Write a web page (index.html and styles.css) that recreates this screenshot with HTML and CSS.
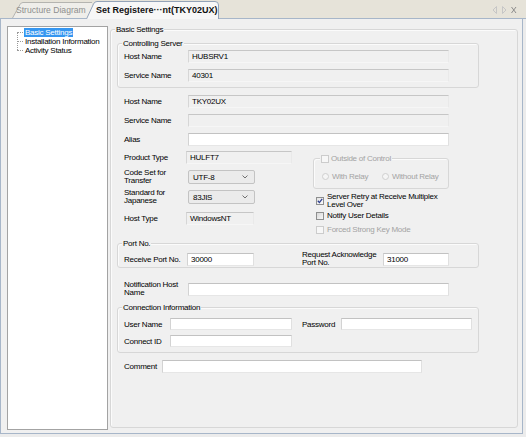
FILE: index.html
```html
<!DOCTYPE html>
<html lang="en">
<head>
  <meta charset="UTF-8">
  <meta name="viewport" content="width=device-width, initial-scale=1.0">
  <title>Set Registered Host</title>
  <link rel="stylesheet" href="styles.css">
</head>
<body>

  <!-- Editor tab strip -->
  <div class="tabbar">
    <div class="tab tab-off">
      <svg class="tab-shape" width="80" height="16" viewBox="0 0 80 16">
        <path d="M0 16 L8 2.5 Q9 0.5 11 0.5 L80 0.5 L80 16 Z" fill="#efeeea"/>
        <path d="M0.5 16 L8 2.5 Q9 0.5 11 0.5 L80 0.5" fill="none" stroke="#b4b4b0"/>
      </svg>
      <span class="tab-text">Structure Diagram</span>
    </div>
    <div class="tab tab-on">
      <svg class="tab-shape" width="133" height="18" viewBox="0 0 133 18">
        <path d="M0 18 L7.5 3 Q8.5 0.5 11 0.5 L129 0.5 Q132.5 0.5 132.5 4 L132.5 18 Z" fill="#f7f7f7"/>
        <path d="M0.5 18 L7.5 3 Q8.5 0.5 11 0.5 L129 0.5 Q132.5 0.5 132.5 4 L132.5 18" fill="none" stroke="#93a3b8"/>
      </svg>
      <span class="tab-text">Set Registere···nt(TKY02UX)</span>
    </div>
    <div class="tab-tools">
      <svg width="26" height="8" viewBox="0 0 26 8">
        <path d="M4.5 0.5 L1 4 L4.5 7.5 Z" fill="none" stroke="#c6c6c6"/>
        <path d="M10.5 0.5 L14 4 L10.5 7.5 Z" fill="none" stroke="#c6c6c6"/>
        <path d="M19.5 1 L24 7 M24 1 L19.5 7" fill="none" stroke="#8c8c8c"/>
      </svg>
    </div>
  </div>

  <div class="frame">

    <!-- Settings tree -->
    <div class="tree">
      <ul class="tree-list">
        <li class="tree-item sel"><span>Basic Settings</span></li>
        <li class="tree-item"><span>Installation Information</span></li>
        <li class="tree-item"><span>Activity Status</span></li>
      </ul>
    </div>

    <!-- Basic Settings form -->
    <div class="group main">
      <span class="group-title">Basic Settings</span>

      <div class="group sub server">
        <span class="group-title">Controlling Server</span>
        <div class="row">
          <span class="lbl w64">Host Name</span>
          <span class="field off w261">HUBSRV1</span>
        </div>
        <div class="row mt6">
          <span class="lbl w64">Service Name</span>
          <span class="field off w261">40301</span>
        </div>
      </div>

      <div class="row indent mt7">
        <span class="lbl w64">Host Name</span>
        <span class="field off w261">TKY02UX</span>
      </div>
      <div class="row indent mt6">
        <span class="lbl w64">Service Name</span>
        <span class="field off w261"></span>
      </div>
      <div class="row indent mt6">
        <span class="lbl w64">Alias</span>
        <span class="field on w261"></span>
      </div>

      <div class="split">
        <div class="col-left">
          <div class="row">
            <span class="lbl w62">Product Type</span>
            <span class="field off w106">HULFT7</span>
          </div>
          <div class="row mt5">
            <span class="lbl w64 two">Code Set for<br>Transfer</span>
            <span class="select w67">UTF-8
              <svg width="6" height="4" viewBox="0 0 6 4"><path d="M0.5 0.5 L3 3 L5.5 0.5" fill="none" stroke="#707070"/></svg>
            </span>
          </div>
          <div class="row mt4">
            <span class="lbl w64 two">Standard for<br>Japanese</span>
            <span class="select w67">83JIS
              <svg width="6" height="4" viewBox="0 0 6 4"><path d="M0.5 0.5 L3 3 L5.5 0.5" fill="none" stroke="#707070"/></svg>
            </span>
          </div>
          <div class="row mt7">
            <span class="lbl w62">Host Type</span>
            <span class="field off w68">WindowsNT</span>
          </div>
        </div>

        <div class="col-right">
          <div class="group outside">
            <span class="group-title check-title"><span class="cb dis"></span>Outside of Control</span>
            <div class="radios">
              <span class="radio-opt first"><span class="radio"></span>With Relay</span>
              <span class="radio-opt"><span class="radio"></span>Without Relay</span>
            </div>
          </div>
          <div class="check mt4">
            <span class="cb on">
              <svg width="6" height="6" viewBox="0 0 6 6"><path d="M0.8 2.8 L2.4 4.6 L5.2 0.9" fill="none" stroke="#2f3f8f" stroke-width="1.3"/></svg>
            </span>
            <span class="two">Server Retry at Receive Multiplex<br>Level Over</span>
          </div>
          <div class="check mt2">
            <span class="cb"></span>
            <span>Notify User Details</span>
          </div>
          <div class="check mt5 muted">
            <span class="cb dis"></span>
            <span>Forced Strong Key Mode</span>
          </div>
        </div>
      </div>

      <div class="group sub port">
        <span class="group-title">Port No.</span>
        <div class="row">
          <span class="lbl w63">Receive Port No.</span>
          <span class="field on w67">30000</span>
          <span class="lbl two req">Request Acknowledge<br>Port No.</span>
          <span class="field on w66">31000</span>
        </div>
      </div>

      <div class="row indent mt13">
        <span class="lbl w64 two">Notification Host<br>Name</span>
        <span class="field on w261"></span>
      </div>

      <div class="group sub conn">
        <span class="group-title">Connection Information</span>
        <div class="row">
          <span class="lbl w46">User Name</span>
          <span class="field on short w122"></span>
          <span class="lbl pw">Password</span>
          <span class="field on short w131"></span>
        </div>
        <div class="row mt5">
          <span class="lbl w46">Connect ID</span>
          <span class="field on short w122"></span>
        </div>
      </div>

      <div class="row indent mt7">
        <span class="lbl w38">Comment</span>
        <span class="field on w260"></span>
      </div>
    </div>

  </div>

</body>
</html>
```

FILE: styles.css
```css
/* Page base */
body {
  margin: 0;
  width: 526px;
  height: 437px;
  overflow: hidden;
  background: #ececec;
  font-family: "Liberation Sans", Arial, sans-serif;
  font-size: 8px;
  line-height: 9px;
  letter-spacing: -0.25px;
  color: #000;
}

/* Tab strip */
.tabbar {
  display: flex;
  align-items: flex-end;
  height: 18px;
  padding-left: 12px;
  background: #e6e3d9;
  border-bottom: 1px solid #a7b6c9;
}

.tab {
  position: relative;
  display: flex;
  align-items: center;
  box-sizing: border-box;
  font-size: 9px;
  letter-spacing: 0;
}

.tab-shape {
  position: absolute;
  left: 0;
  top: 0;
}

.tab-text {
  position: relative;
}

.tab-off {
  width: 80px;
  height: 16px;
  padding: 1px 0 0 4px;
  font-size: 8.6px;
  color: #8e8e8e;
}

.tab-on {
  width: 133px;
  height: 18px;
  margin-left: -6px;
  margin-bottom: -1px;
  padding: 1px 0 0 10px;
  font-weight: bold;
  color: #111;
}

.tab-tools {
  margin-left: auto;
  margin-right: 8px;
  align-self: center;
  display: flex;
  padding-top: 2px;
}

/* Main frame below the tabs */
.frame {
  display: flex;
  align-items: flex-start;
  box-sizing: border-box;
  width: 523px;
  height: 415px;
  padding: 7px 0 0 6px;
  background: #f0f0f0;
  border: 1px solid #a7b6c9;
  border-top: 0;
}

/* Tree on the left */
.tree {
  box-sizing: border-box;
  width: 101px;
  height: 404px;
  background: #fff;
  border: 1px solid #a3a3a3;
}

.tree-list {
  position: relative;
  margin: 0;
  padding: 1px 0 0 16px;
  list-style: none;
}

.tree-list::before {
  content: "";
  position: absolute;
  left: 9px;
  top: 5px;
  height: 18px;
  border-left: 1px dotted #9a9a9a;
}

.tree-item {
  position: relative;
  height: 9px;
  white-space: nowrap;
}

.tree-item::before {
  content: "";
  position: absolute;
  left: -7px;
  top: 4px;
  width: 6px;
  border-top: 1px dotted #9a9a9a;
}

.tree-item span {
  display: inline-block;
  height: 9px;
  padding: 0 1px;
}

.tree-item.sel span {
  background: #3596f0;
  color: #fff;
}

/* Group boxes */
.group {
  position: relative;
  box-sizing: border-box;
  border: 1px solid #d7d7d7;
  border-radius: 3px;
  box-shadow: inset 1px 1px 0 #fbfbfb;
}

.group-title {
  position: absolute;
  top: -5px;
  left: 4px;
  padding: 0 1px;
  background: #f0f0f0;
  white-space: nowrap;
}

.main {
  width: 408px;
  height: 399px;
  margin: 3px 0 0 2px;
  padding: 13px 0 0 6px;
}

.sub {
  width: 362px;
}

.server {
  height: 45px;
  padding: 6px 0 0 6px;
}

.port {
  height: 25px;
  margin-top: 9px;
  padding: 7px 0 0 6px;
}

.conn {
  height: 46px;
  margin-top: 10px;
  padding: 10px 0 0 6px;
}

/* Form rows */
.row {
  display: flex;
  align-items: center;
}

.indent {
  padding-left: 7px;
}

.lbl {
  flex: none;
  white-space: nowrap;
}

.two {
  line-height: 8px;
}

.req {
  width: 81px;
  margin-left: 48px;
}

.pw {
  width: 39px;
  margin-left: 10px;
}

.field {
  display: flex;
  align-items: center;
  box-sizing: border-box;
  height: 13px;
  padding-left: 3px;
  border: 1px solid;
  white-space: nowrap;
}

.field.short {
  height: 12px;
}

.field.off {
  background: #f0f0f0;
  border-color: #c6c6c6 #e9e9e9 #f6f6f6 #d6d6d6;
}

.field.on {
  background: #fff;
  border-color: #c2c2c2 #e0e0e0 #e6e6e6 #d3d3d3;
}

.select {
  display: flex;
  align-items: center;
  justify-content: space-between;
  box-sizing: border-box;
  height: 14px;
  padding: 0 6px 0 4px;
  background: #ebebeb;
  border: 1px solid #c3c3c3;
  border-radius: 2px;
}

/* widths */
.w38 { width: 38px; }
.w46 { width: 46px; }
.w62 { width: 62px; }
.w63 { width: 63px; }
.w64 { width: 64px; }
.w66 { width: 66px; }
.w67 { width: 67px; }
.w68 { width: 68px; }
.w106 { width: 106px; }
.w122 { width: 122px; }
.w131 { width: 131px; }
.w260 { width: 260px; }
.w261 { width: 261px; }

/* spacing */
.mt2 { margin-top: 2px; }
.mt4 { margin-top: 4px; }
.mt5 { margin-top: 5px; }
.mt6 { margin-top: 6px; }
.mt7 { margin-top: 7px; }
.mt13 { margin-top: 13px; }

/* Product type / options block */
.split {
  display: flex;
  margin-top: 5px;
}

.col-left {
  width: 189px;
  padding-left: 7px;
}

.col-right {
  width: 140px;
}

.outside {
  width: 136px;
  height: 31px;
  margin-top: 7px;
  padding: 13px 0 0 8px;
  color: #a3a3a3;
}

.check-title {
  left: 6px;
  display: flex;
  align-items: center;
  gap: 2px;
}

.radios {
  display: flex;
  height: 9px;
  align-items: center;
}

.radio-opt {
  display: flex;
  align-items: center;
  gap: 3px;
}

.radio-opt.first {
  width: 60px;
}

.radio {
  box-sizing: border-box;
  width: 7px;
  height: 7px;
  border: 1px solid #cfcfcf;
  border-radius: 50%;
  background: #f5f5f5;
}

.check {
  display: flex;
  align-items: center;
  gap: 3px;
  padding-left: 3px;
  min-height: 9px;
}

.muted {
  color: #a3a3a3;
}

.cb {
  flex: none;
  display: flex;
  align-items: center;
  justify-content: center;
  box-sizing: border-box;
  width: 8px;
  height: 8px;
  border: 1px solid #8e8f8f;
  background: linear-gradient(135deg, #d8d8d8, #f7f7f7);
}

.cb.on {
  background: linear-gradient(135deg, #e4e4e4, #fafafa);
}

.cb.dis {
  border-color: #cccccc;
  background: #f7f7f7;
}
```
